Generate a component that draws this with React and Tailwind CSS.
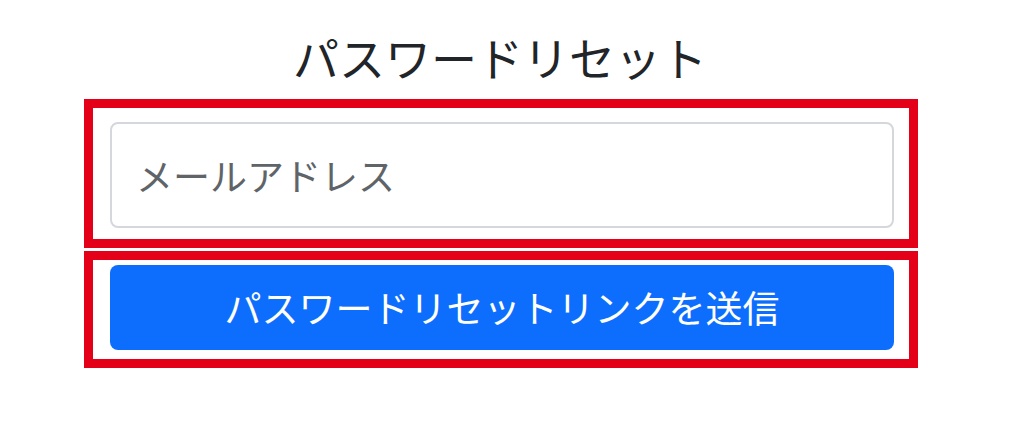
import React, { useState } from "react";

const jp = "font-['Noto_Sans_CJK_JP','Noto_Sans',sans-serif]";

const App = () => {
  const [email, setEmail] = useState("");

  const handleSubmit = (e) => {
    e.preventDefault();
  };

  return (
    <div className={`w-full h-[422px] bg-white pl-[84px] pt-[33px] ${jp}`}>
      <div className="w-[834px]">
        <h1 className="text-center text-[46px] leading-[46px] font-normal text-[#212529] mb-[20px] pr-[2px]">
          パスワードリセット
        </h1>

        <form onSubmit={handleSubmit} className="flex flex-col gap-[3px]">
          {/* email field */}
          <div className="h-[149px] border-[9px] border-[#e50019] pl-[17px] pr-[15px] pt-[14px]">
            <input
              type="email"
              value={email}
              onChange={(e) => setEmail(e.target.value)}
              placeholder="メールアドレス"
              className="w-full h-[106px] rounded-[8px] border-2 border-[#d4d8dc] bg-white px-[24px] text-[37px] text-[#212529] placeholder:text-[#5f6468] outline-none"
            />
          </div>

          {/* submit */}
          <div className="h-[117px] border-[9px] border-[#e50019] pl-[17px] pr-[15px] pt-[5px]">
            <button
              type="submit"
              className="w-full h-[85px] rounded-[8px] bg-[#0d6efd] text-white text-[37px] leading-none flex items-center justify-center"
            >
              パスワードリセットリンクを送信
            </button>
          </div>
        </form>
      </div>
    </div>
  );
};

export default App;
